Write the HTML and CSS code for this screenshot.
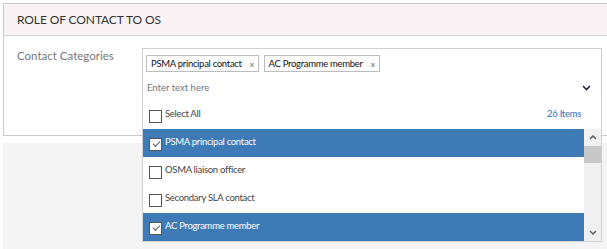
FILE: index.html
```html
<!DOCTYPE html>
<html lang="en">
<head>
    <meta charset="UTF-8">
    <meta name="viewport" content="width=device-width, initial-scale=1.0">
    <title>Role of contact to OS</title>
    <link rel="stylesheet" href="styles.css">
</head>
<body>
    <!-- Painel da seção -->
    <div class="panel">
        <div class="panel-header">ROLE OF CONTACT TO OS</div>
        <div class="panel-body">
            <div class="field-label">Contact Categories</div>

            <!-- Multiselect com lista aberta -->
            <div class="multiselect">
                <div class="ms-input">
                    <div class="ms-tags">
                        <span class="tag">PSMA principal contact <span class="tag-x">x</span></span>
                        <span class="tag">AC Programme member <span class="tag-x">x</span></span>
                    </div>
                    <div class="ms-search">
                        <span class="placeholder">Enter text here</span>
                        <svg class="chevron" width="9" height="6" viewBox="0 0 9 6">
                            <path d="M1 1 L4.5 4.5 L8 1" fill="none" stroke="#1d2540" stroke-width="1.6"/>
                        </svg>
                    </div>
                </div>

                <div class="ms-popup">
                    <div class="ms-head">
                        <div class="ms-option select-all">
                            <span class="checkbox"></span>
                            <span class="label">Select All</span>
                        </div>
                        <span class="ms-count">26 Items</span>
                    </div>
                    <div class="ms-list">
                        <div class="ms-items">
                            <div class="ms-option selected"><span class="checkbox checked"></span><span class="label">PSMA principal contact</span></div>
                            <div class="ms-option"><span class="checkbox"></span><span class="label">OSMA liaison officer</span></div>
                            <div class="ms-option"><span class="checkbox"></span><span class="label">Secondary SLA contact</span></div>
                            <div class="ms-option selected"><span class="checkbox checked"></span><span class="label">AC Programme member</span></div>
                        </div>
                        <div class="scrollbar">
                            <div class="sb-btn">
                                <svg width="8" height="5" viewBox="0 0 8 5"><path d="M1 4 L4 1 L7 4" fill="none" stroke="#606060" stroke-width="1.5"/></svg>
                            </div>
                            <div class="sb-track"><div class="sb-thumb"></div></div>
                            <div class="sb-btn">
                                <svg width="8" height="5" viewBox="0 0 8 5"><path d="M1 1 L4 4 L7 1" fill="none" stroke="#606060" stroke-width="1.5"/></svg>
                            </div>
                        </div>
                    </div>
                </div>
            </div>
        </div>
    </div>

    <div class="grey-area"></div>
</body>
</html>
```

FILE: styles.css
```css
/* Estilos básicos */
body {
    font-family: Lato, "Open Sans", Arial, sans-serif;
    margin: 0;
    padding: 3px 0 0 3px;
    background-color: #fff;
    overflow: hidden;
    height: 246px;
}

.panel {
    width: 604px;
    border: 1px solid #c8c8c8;
    border-right: none;
    box-sizing: border-box;
    background-color: #fff;
}

.panel-header {
    height: 31px;
    line-height: 31px;
    padding-left: 13px;
    background-color: #f9f3f5;
    border-bottom: 1px solid #d4d4d4;
    color: #333;
    font-size: 12px;
    letter-spacing: -0.1px;
}

.panel-body {
    display: flex;
    height: 99px;
    padding: 12px 0 0 13px;
    box-sizing: border-box;
}

.field-label {
    width: 125px;
    padding-top: 1px;
    color: #777;
    font-size: 11.5px;
}

.multiselect {
    position: relative;
    width: 460px;
}

.ms-input {
    border: 1px solid #cfcfcf;
    border-bottom-color: #d8d8d8;
    box-sizing: border-box;
    height: 54px;
}

.ms-tags {
    display: flex;
    gap: 5px;
    padding: 6px 0 0 3px;
}

.tag {
    display: flex;
    align-items: center;
    height: 15px;
    padding: 0 4px;
    border: 1px solid #bdbdbd;
    color: #111;
    font-size: 9.5px;
    letter-spacing: -0.3px;
}

.tag-x {
    margin-left: 8px;
    color: #8a8a8a;
    font-size: 8px;
    font-weight: bold;
}

.ms-search {
    display: flex;
    justify-content: space-between;
    align-items: center;
    padding: 10px 10px 0 4px;
}

.placeholder {
    color: #777;
    font-size: 9.5px;
}

.ms-popup {
    position: absolute;
    top: 53px;
    left: 0;
    width: 460px;
    background-color: #fff;
    border: 1px solid #d0d0d0;
    border-top: none;
    box-sizing: border-box;
}

.ms-head {
    display: flex;
    justify-content: space-between;
    align-items: center;
    height: 28px;
    padding-right: 20px;
}

.ms-count,
.select-all {
    color: #2a6fc0;
}

.ms-count {
    margin-bottom: 3px;
    font-size: 9.5px;
    letter-spacing: -0.3px;
}

.ms-list {
    display: flex;
    height: 112px;
}

.ms-items {
    flex: 1;
}

.ms-option {
    display: flex;
    align-items: center;
    gap: 3px;
    height: 28px;
    padding-left: 6px;
    color: #444;
    font-size: 9.5px;
    letter-spacing: -0.3px;
}

.ms-option .label {
    margin-bottom: 3px;
}

.ms-option.selected {
    background-color: #3d7ab6;
    color: #fff;
}

.checkbox {
    width: 11px;
    height: 11px;
    margin-top: 2px;
    border: 1px solid #555;
    background-color: #fff;
    position: relative;
}

.checkbox.checked::after {
    content: "";
    position: absolute;
    left: 3px;
    top: 2px;
    width: 6px;
    height: 3px;
    border-left: 1.5px solid #555;
    border-bottom: 1.5px solid #555;
    transform: rotate(-45deg);
}

.scrollbar {
    width: 17px;
    display: flex;
    flex-direction: column;
    background-color: #f0f0f0;
}

.sb-btn {
    height: 17px;
    display: flex;
    align-items: center;
    justify-content: center;
}

.sb-track {
    flex: 1;
}

.sb-thumb {
    height: 17px;
    background-color: #c8c8c8;
}

.grey-area {
    margin-top: 7px;
    height: 106px;
    width: 604px;
    background-color: #f4f4f4;
}
```
